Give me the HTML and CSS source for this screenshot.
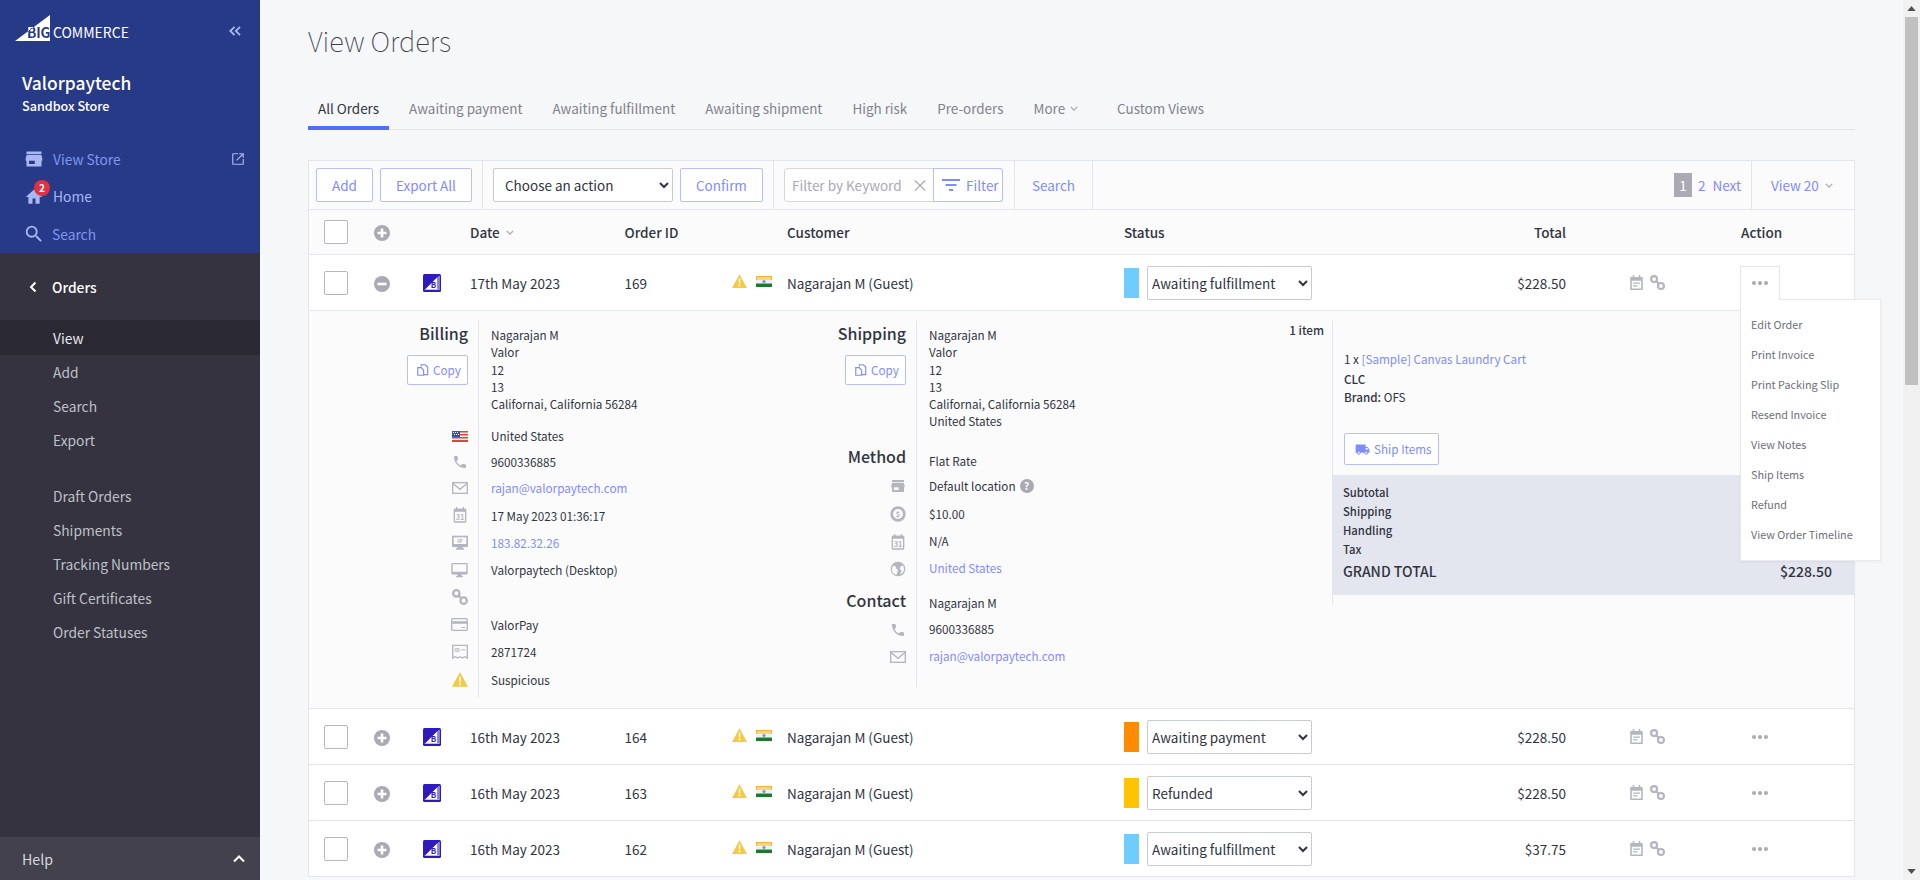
FILE: index.html
```html
<!DOCTYPE html>
<html lang="en">
<head>
<meta charset="utf-8">
<title>View Orders</title>
<link rel="stylesheet" href="styles.css">
</head>
<body>
<svg class="sprite" aria-hidden="true">
  <symbol id="i-store" viewBox="0 0 24 24"><path d="M21 3H3v3h18V3zm1 11v-2.500L20.800 7H3.200L2 11.500V14h1v7h18v-7h1zm-9 4H6v-4h7v4z"/></symbol>
  <symbol id="i-home" viewBox="0 0 24 24"><path d="M10 21v-7h4v7h5.500v-9H23L12 2 1 12h3.500v9z"/></symbol>
  <symbol id="i-search" viewBox="0 0 24 24"><path d="M15.500 14h-.79l-.28-.27A6.470 6.470 0 0 0 16 9.500 6.500 6.500 0 1 0 9.500 16c1.610 0 3.090-.59 4.230-1.570l.27.28v.79l5 4.990L20.490 19l-4.990-5zm-6 0C7.010 14 5 11.990 5 9.500S7.010 5 9.500 5 14 7.010 14 9.500 11.990 14 9.500 14z"/></symbol>
  <symbol id="i-external" viewBox="0 0 24 24"><path d="M20 20H4V4h8V2H4a2 2 0 0 0-2 2v16a2 2 0 0 0 2 2h16a2 2 0 0 0 2-2v-8h-2v8zM14 2v2h4.600L8.800 13.800l1.400 1.400L20 5.400V10h2V2h-8z"/></symbol>
  <symbol id="i-phone" viewBox="0 0 24 24"><path d="M6.620 10.790c1.440 2.830 3.760 5.140 6.590 6.590l2.200-2.200c.27-.27.67-.36 1.020-.24 1.120.37 2.330.57 3.570.57.550 0 1 .45 1 1V20c0 .55-.45 1-1 1C10.610 21 3 13.390 3 4c0-.55.45-1 1-1h3.500c.55 0 1 .45 1 1 0 1.250.2 2.450.57 3.570.11.35.03.74-.25 1.020l-2.200 2.200z"/></symbol>
  <symbol id="i-mail" viewBox="0 0 24 18"><rect x="1" y="1" width="22" height="16" class="ln"/><path d="M1 2l11 9 11-9" class="ln"/></symbol>
  <symbol id="i-cal" viewBox="0 0 20 24"><rect x="1.500" y="3.500" width="17" height="19" rx="1" class="ln"/><path d="M1 2.500h18V7H1zM4 0h2v3H4zM14 0h2v3h-2z"/><text x="10" y="19" class="svg-num">31</text></symbol>
  <symbol id="i-note" viewBox="0 0 20 24"><path d="M1 3h3V0h2.500v3h7V0H16v3h3a1 1 0 0 1 1 1v19a1 1 0 0 1-1 1H1a1 1 0 0 1-1-1V4a1 1 0 0 1 1-1zm1.500 6v12.500h15V9z"/><path d="M4.500 12h11v2h-11zM4.500 16.500h7v2h-7z"/></symbol>
  <symbol id="i-ip" viewBox="0 0 24 22"><path d="M1 0h22a1 1 0 0 1 1 1v15a1 1 0 0 1-1 1h-7v2h2v2H6v-2h2v-2H1a1 1 0 0 1-1-1V1a1 1 0 0 1 1-1z"/><path d="M2.500 2.500h19v10h-19z" fill="#fbfbfb"/><text x="12" y="10.800" class="svg-ip svg-mid">IP</text></symbol>
  <symbol id="i-monitor" viewBox="0 0 24 22"><path d="M2 0h20a2 2 0 0 1 2 2v13a2 2 0 0 1-2 2h-7v2h2v2H7v-2h2v-2H2a2 2 0 0 1-2-2V2a2 2 0 0 1 2-2zm0 2v11h20V2z"/></symbol>
  <symbol id="i-link" viewBox="0 0 24 24"><g class="ln ln-thick"><circle cx="6.500" cy="6.500" r="4.800"/><circle cx="17.500" cy="17.500" r="4.800"/><path d="M9.500 9.500l5 5"/></g></symbol>
  <symbol id="i-card" viewBox="0 0 26 20"><rect x="1" y="1" width="24" height="18" rx="1.500" class="ln"/><path d="M1 5h24v4H1zM16 14h6v1.500h-6z"/></symbol>
  <symbol id="i-id" viewBox="0 0 24 22"><path d="M1 1h22v19l-4-2-3.500 2-3.500-2-3.500 2L5 18l-4 2z" class="ln"/><text x="3.500" y="10.500" class="svg-ip">ID</text><path d="M14 7h6v1.500h-6z"/></symbol>
  <symbol id="i-warn" viewBox="0 0 24 22"><path d="M12 0l12 22H0z" fill="#f5c944"/><path d="M10.600 7h2.800l-.4 8h-2zM10.600 16.500h2.800v3h-2.800z" fill="#fff"/></symbol>
  <symbol id="i-dollar" viewBox="0 0 24 24"><circle cx="12" cy="12" r="9.500" class="ln ln-heavy"/><text x="12" y="16" class="svg-dollar">$</text></symbol>
  <symbol id="i-globe" viewBox="0 0 24 24"><path d="M12 1a11 11 0 1 0 0 22 11 11 0 0 0 0-22zM3 13c0-2.500.7-4.800 2.300-6.200l3.700 2 .5 3 2.500 1.500-.5 3-2 4.500A8.500 8.500 0 0 1 3 13zm12 7l1.500-3.500 1-1.500-2-2.500-1-1.500 2-3 3-1.500C20 8 21 10 21 12.500A8.500 8.500 0 0 1 15 20z" fill-rule="evenodd"/></symbol>
  <symbol id="i-truck" viewBox="0 0 24 24"><path d="M20 8h-3V4H3c-1.100 0-2 .9-2 2v11h2c0 1.660 1.340 3 3 3s3-1.340 3-3h6c0 1.660 1.340 3 3 3s3-1.340 3-3h2v-5l-3-4zM6 18.500c-.83 0-1.500-.67-1.500-1.500s.67-1.500 1.500-1.500 1.500.67 1.500 1.500-.67 1.500-1.500 1.500zm13.500-9l1.960 2.500H17V9.500h2.500zm-1.500 9c-.83 0-1.500-.67-1.500-1.500s.67-1.500 1.500-1.500 1.500.67 1.500 1.500-.67 1.500-1.500 1.500z"/></symbol>
  <symbol id="i-copy" viewBox="0 0 24 24"><path d="M9 6V3h7l4 4v13h-7" class="ln"/><path d="M3 8h6l4 4v9H3z" class="ln"/></symbol>
  <symbol id="i-plus" viewBox="0 0 16 16"><circle cx="8" cy="8" r="8"/><path d="M6.700 3.500h2.600v3.200h3.200v2.600H9.300v3.200H6.700V9.300H3.500V6.700h3.200z" fill="#fff"/></symbol>
  <symbol id="i-minus" viewBox="0 0 16 16"><circle cx="8" cy="8" r="8"/><path d="M3.500 6.700h9v2.600h-9z" fill="#fff"/></symbol>
  <symbol id="i-chip" viewBox="0 0 18 18"><rect width="18" height="18" rx="1.500" fill="#2f1bbd"/><path d="M2 15.500L14.500 3v12.500z" fill="#fff"/><path d="M15.500 2h1v14h-15v-.5h14z" fill="#fff" opacity=".85"/><text x="10.500" y="14.200" class="svg-b">B</text></symbol>
  <symbol id="i-in" viewBox="0 0 16 11"><path d="M0 0h16v4H0z" fill="#f6b13d"/><path d="M1 1h14v3H1z" fill="#fbd77d"/><path d="M0 4h16v3.500H0z" fill="#eef0f2"/><path d="M0 7.500h16V11H0z" fill="#1b7a2e"/><circle cx="8" cy="5.600" r="1.500" fill="#7f8fb8"/></symbol>
  <symbol id="i-us" viewBox="0 0 16 11"><path d="M0 0h16v11H0z" fill="#f3f3f3"/><path d="M0 0h16v1.500H0zM0 3h16v1.500H0zM0 6h16v1.500H0zM0 9h16v2H0z" fill="#d9463c"/><path d="M0 0h8v6H0z" fill="#3b4fb8"/><path d="M1 1h1v1H1zM3 1h1v1H3zM5 1h1v1H5zM2 3h1v1H2zM4 3h1v1H4zM6 3h1v1H6z" fill="#fff"/></symbol>
  <symbol id="i-dots" viewBox="0 0 16 4"><circle cx="2" cy="2" r="2"/><circle cx="8" cy="2" r="2"/><circle cx="14" cy="2" r="2"/></symbol>
</svg>

<div class="app">
  <aside class="sidebar">
    <div class="side-blue">
      <div class="brand">
        <div class="logo">
          <svg class="logo-mark" viewBox="0 0 35 26"><path d="M0 26L35 0v26z" fill="#fff"/></svg>
          <span class="logo-big">BIG</span><span class="logo-commerce">COMMERCE</span>
        </div>
        <svg class="collapse" viewBox="0 0 12 10"><path d="M5.500 .8L1.300 5l4.200 4.200M11 .8L6.800 5 11 9.200"/></svg>
      </div>
      <div class="store-name">Valorpaytech</div>
      <div class="store-sub">Sandbox Store</div>
      <nav class="blue-nav">
        <a class="blue-item"><svg class="blue-ico ico-store"><use href="#i-store"/></svg><span>View Store</span><svg class="ext-ico"><use href="#i-external"/></svg></a>
        <a class="blue-item blue-home"><svg class="blue-ico ico-home"><use href="#i-home"/></svg><span>Home</span><b class="badge">2</b></a>
        <a class="blue-item"><svg class="blue-ico ico-search"><use href="#i-search"/></svg><span>Search</span></a>
      </nav>
    </div>
    <div class="side-dark">
      <div class="orders-head"><svg class="back-ico" viewBox="0 0 8 12"><path d="M6.500 1.500L2 6l4.500 4.500"/></svg>Orders</div>
      <a class="dark-item is-active">View</a>
      <a class="dark-item">Add</a>
      <a class="dark-item">Search</a>
      <a class="dark-item">Export</a>
      <a class="dark-item dark-gap">Draft Orders</a>
      <a class="dark-item">Shipments</a>
      <a class="dark-item">Tracking Numbers</a>
      <a class="dark-item">Gift Certificates</a>
      <a class="dark-item">Order Statuses</a>
    </div>
    <div class="help"><span>Help</span><svg class="help-ico" viewBox="0 0 12 8"><path d="M1 6.500l5-5 5 5"/></svg></div>
  </aside>

  <main class="main">
    <h1 class="title">View Orders</h1>
    <div class="tabs">
      <a class="tab is-active">All Orders</a>
      <a class="tab">Awaiting payment</a>
      <a class="tab">Awaiting fulfillment</a>
      <a class="tab">Awaiting shipment</a>
      <a class="tab">High risk</a>
      <a class="tab">Pre-orders</a>
      <a class="tab tab-more">More<svg class="chev" viewBox="0 0 10 6"><path d="M1 1l4 4 4-4"/></svg></a>
      <a class="tab">Custom Views</a>
    </div>

    <section class="table">
      <div class="toolbar">
        <div class="tgroup tg-add"><button class="btn">Add</button><button class="btn">Export All</button></div>
        <div class="tgroup tg-action">
          <select class="sel sel-action"><option>Choose an action</option></select>
          <button class="btn">Confirm</button>
        </div>
        <div class="tgroup tg-filter">
          <div class="filter">
            <span class="filter-text">Filter by Keyword</span>
            <span class="filter-x">×</span>
            <span class="filter-btn"><svg class="filter-ico" viewBox="0 0 18 12"><path d="M0 1h18M3.500 6h11M7 11h4"/></svg>Filter</span>
          </div>
        </div>
        <div class="tgroup tg-search"><a class="link">Search</a></div>
        <div class="pager">
          <span class="page-cur">1</span><a class="link page-link">2</a><a class="link page-next">Next</a>
        </div>
        <div class="tgroup tg-view"><a class="link">View 20</a><svg class="chev" viewBox="0 0 10 6"><path d="M1 1l4 4 4-4"/></svg></div>
      </div>

      <div class="row head">
        <span class="box"></span>
        <svg class="exp"><use href="#i-plus"/></svg>
        <span></span>
        <span class="date-h">Date<svg class="chev" viewBox="0 0 10 6"><path d="M1 1l4 4 4-4"/></svg></span>
        <span>Order ID</span>
        <span></span>
        <span>Customer</span>
        <span>Status</span>
        <span class="ta-r">Total</span>
        <span></span>
        <span>Action</span>
      </div>

      <div class="row">
        <span class="box"></span>
        <svg class="exp"><use href="#i-minus"/></svg>
        <svg class="chip"><use href="#i-chip"/></svg>
        <span>17th May 2023</span>
        <span>169</span>
        <span class="marks"><svg class="warn"><use href="#i-warn"/></svg><svg class="flag"><use href="#i-in"/></svg></span>
        <span>Nagarajan M (Guest)</span>
        <span class="status"><i class="swatch s-blue"></i><select class="sel"><option>Awaiting fulfillment</option></select></span>
        <span class="ta-r">$228.50</span>
        <span class="acts"><svg class="act-cal"><use href="#i-note"/></svg><svg class="act-link"><use href="#i-link"/></svg></span>
        <span class="action-cell">
          <span class="dots-btn is-open"><svg class="dots"><use href="#i-dots"/></svg></span>
          <ul class="menu">
            <li>Edit Order</li>
            <li>Print Invoice</li>
            <li>Print Packing Slip</li>
            <li>Resend Invoice</li>
            <li>View Notes</li>
            <li>Ship Items</li>
            <li>Refund</li>
            <li>View Order Timeline</li>
          </ul>
        </span>
      </div>

      <div class="detail">
        <div class="dcol dcol-billing">
          <div class="labels">
            <h3 class="dh">Billing</h3>
            <button class="btn btn-copy"><svg class="copy-ico"><use href="#i-copy"/></svg>Copy</button>
            <div class="l-gap-a"></div>
            <div class="dr dr-25"><svg class="flag"><use href="#i-us"/></svg></div>
            <div class="dr dr-26"><svg class="di"><use href="#i-phone"/></svg></div>
            <div class="dr"><svg class="di di-mail"><use href="#i-mail"/></svg></div>
            <div class="dr"><svg class="di"><use href="#i-cal"/></svg></div>
            <div class="dr"><svg class="di"><use href="#i-ip"/></svg></div>
            <div class="dr"><svg class="di di-wide"><use href="#i-monitor"/></svg></div>
            <div class="dr"><svg class="di di-sm"><use href="#i-link"/></svg></div>
            <div class="dr"><svg class="di di-card"><use href="#i-card"/></svg></div>
            <div class="dr"><svg class="di"><use href="#i-id"/></svg></div>
            <div class="dr"><svg class="di di-warn"><use href="#i-warn"/></svg></div>
          </div>
          <div class="vals vals-billing">
            <div class="addr">Nagarajan M<br>Valor<br>12<br>13<br>Californai, California 56284</div>
            <div class="v-gap-a"></div>
            <div class="dr dr-25">United States</div>
            <div class="dr dr-26">9600336885</div>
            <div class="dr"><a class="link">rajan@valorpaytech.com</a></div>
            <div class="dr">17 May 2023 01:36:17</div>
            <div class="dr"><a class="link">183.82.32.26</a></div>
            <div class="dr">Valorpaytech (Desktop)</div>
            <div class="dr"></div>
            <div class="dr">ValorPay</div>
            <div class="dr">2871724</div>
            <div class="dr">Suspicious</div>
          </div>
        </div>

        <div class="dcol dcol-shipping">
          <div class="labels">
            <h3 class="dh">Shipping</h3>
            <button class="btn btn-copy"><svg class="copy-ico"><use href="#i-copy"/></svg>Copy</button>
            <h3 class="dh dh-method">Method</h3>
            <div class="dr dr-first"><svg class="di"><use href="#i-store"/></svg></div>
            <div class="dr dr-push"><svg class="di"><use href="#i-dollar"/></svg></div>
            <div class="dr"><svg class="di"><use href="#i-cal"/></svg></div>
            <div class="dr"><svg class="di"><use href="#i-globe"/></svg></div>
            <h3 class="dh dh-contact">Contact</h3>
            <div class="dr dr-first"><svg class="di"><use href="#i-phone"/></svg></div>
            <div class="dr"><svg class="di di-mail"><use href="#i-mail"/></svg></div>
          </div>
          <div class="vals vals-shipping">
            <div class="addr">Nagarajan M<br>Valor<br>12<br>13<br>Californai, California 56284<br>United States</div>
            <div class="dr dr-25 dr-flat">Flat Rate</div>
            <div class="dr dr-26 dr-tuck">Default location<i class="qm">?</i></div>
            <div class="dr dr-push">$10.00</div>
            <div class="dr">N/A</div>
            <div class="dr"><a class="link">United States</a></div>
            <div class="dr dr-contact">Nagarajan M</div>
            <div class="dr dr-25">9600336885</div>
            <div class="dr"><a class="link">rajan@valorpaytech.com</a></div>
          </div>
        </div>

        <div class="dcol-count">1 item</div>

        <div class="dcol-items">
          <div class="items-top">
            <div class="item-name">1 x <a class="link">[Sample] Canvas Laundry Cart</a></div>
            <div class="item-sku">CLC</div>
            <div class="item-brand"><b class="sb">Brand:</b> OFS</div>
            <button class="btn btn-ship"><svg class="truck-ico"><use href="#i-truck"/></svg>Ship Items</button>
          </div>
          <div class="totals">
            <div class="tot">Subtotal</div>
            <div class="tot">Shipping</div>
            <div class="tot">Handling</div>
            <div class="tot">Tax</div>
            <div class="tot-grand"><span>GRAND TOTAL</span><span class="grand-val">$228.50</span></div>
          </div>
        </div>
      </div>

      <div class="row">
        <span class="box"></span>
        <svg class="exp"><use href="#i-plus"/></svg>
        <svg class="chip"><use href="#i-chip"/></svg>
        <span>16th May 2023</span>
        <span>164</span>
        <span class="marks"><svg class="warn"><use href="#i-warn"/></svg><svg class="flag"><use href="#i-in"/></svg></span>
        <span>Nagarajan M (Guest)</span>
        <span class="status"><i class="swatch s-orange"></i><select class="sel"><option>Awaiting payment</option></select></span>
        <span class="ta-r">$228.50</span>
        <span class="acts"><svg class="act-cal"><use href="#i-note"/></svg><svg class="act-link"><use href="#i-link"/></svg></span>
        <span class="action-cell"><span class="dots-btn"><svg class="dots"><use href="#i-dots"/></svg></span></span>
      </div>
      <div class="row">
        <span class="box"></span>
        <svg class="exp"><use href="#i-plus"/></svg>
        <svg class="chip"><use href="#i-chip"/></svg>
        <span>16th May 2023</span>
        <span>163</span>
        <span class="marks"><svg class="warn"><use href="#i-warn"/></svg><svg class="flag"><use href="#i-in"/></svg></span>
        <span>Nagarajan M (Guest)</span>
        <span class="status"><i class="swatch s-yellow"></i><select class="sel"><option>Refunded</option></select></span>
        <span class="ta-r">$228.50</span>
        <span class="acts"><svg class="act-cal"><use href="#i-note"/></svg><svg class="act-link"><use href="#i-link"/></svg></span>
        <span class="action-cell"><span class="dots-btn"><svg class="dots"><use href="#i-dots"/></svg></span></span>
      </div>
      <div class="row">
        <span class="box"></span>
        <svg class="exp"><use href="#i-plus"/></svg>
        <svg class="chip"><use href="#i-chip"/></svg>
        <span>16th May 2023</span>
        <span>162</span>
        <span class="marks"><svg class="warn"><use href="#i-warn"/></svg><svg class="flag"><use href="#i-in"/></svg></span>
        <span>Nagarajan M (Guest)</span>
        <span class="status"><i class="swatch s-blue"></i><select class="sel"><option>Awaiting fulfillment</option></select></span>
        <span class="ta-r">$37.75</span>
        <span class="acts"><svg class="act-cal"><use href="#i-note"/></svg><svg class="act-link"><use href="#i-link"/></svg></span>
        <span class="action-cell"><span class="dots-btn"><svg class="dots"><use href="#i-dots"/></svg></span></span>
      </div>
    </section>
  </main>

  <div class="scrollbar">
    <svg class="sb-arrow" viewBox="0 0 10 6"><path d="M5 0l5 6H0z"/></svg>
    <div class="sb-thumb"></div>
    <svg class="sb-arrow sb-down" viewBox="0 0 10 6"><path d="M0 0h10L5 6z"/></svg>
  </div>
</div>
</body>
</html>
```
FILE: styles.css
```css
* { box-sizing: border-box; }
html, body { margin: 0; height: 100%; overflow: hidden; }
body {
  font-family: "Noto Sans CJK SC", "Noto Sans", sans-serif;
  font-size: 13.500px;
  line-height: 20px;
  color: #313440;
  background: #f6f7f9;
}
.sprite { display: none; }
svg { display: block; fill: currentColor; flex: none; }
h1, h3, ul { margin: 0; padding: 0; font-weight: normal; list-style: none; }
a { color: inherit; text-decoration: none; }
.ln { fill: none; stroke: currentColor; stroke-width: 2; }
.ln-thick { stroke-width: 3.400; }
.ln-heavy { stroke-width: 4; }
.svg-num { font-size: 11px; font-weight: 700; text-anchor: middle; }
.svg-ip { font-size: 8px; font-weight: 700; text-anchor: start; }
.svg-mid { text-anchor: middle; }
.svg-dollar { font-size: 11px; font-weight: 700; text-anchor: middle; }
.svg-b { font-size: 8px; font-weight: 700; text-anchor: middle; fill: #2f1bbd; }

.app { display: flex; height: 880px; overflow: hidden; }

/* sidebar */
.sidebar { width: 260px; flex: none; display: flex; flex-direction: column; background: #35333f; }
.side-blue { height: 253px; background: #273a87; padding: 15px 0 0; color: #fff; }
.brand { display: flex; justify-content: space-between; padding: 0 19px 0 15px; height: 26px; }
.logo { position: relative; width: 116px; height: 26px; }
.logo-mark { width: 35px; height: 26px; }
.logo-big, .logo-commerce { position: absolute; top: 9px; font-size: 14px; line-height: 16px; font-weight: 400; }
.logo-big {
  left: 12px;
  font-weight: 700;
  letter-spacing: -.3px;
  background: linear-gradient(143deg, #fff 23%, #273a87 23%);
  -webkit-background-clip: text;
  background-clip: text;
  color: transparent;
}
.logo-commerce { left: 38px; color: #fff; }
.collapse { width: 12px; height: 10px; margin-top: 11px; fill: none; stroke: #a9b8f5; stroke-width: 1.800; }
.store-name { margin: 31px 0 0 22px; font-size: 17.400px; line-height: 22px; font-weight: 500; }
.store-sub { margin: 3px 0 0 22px; font-size: 12.600px; line-height: 18px; font-weight: 500; }
.blue-nav { margin-top: 25px; }
.blue-item { position: relative; display: flex; align-items: center; height: 37.500px; padding-left: 24px; color: #7f98ee; font-size: 13.800px; }
.blue-ico { color: #a9b8f5; }
.ico-store { width: 20px; height: 20px; margin-right: 9px; }
.ico-home { width: 18px; height: 18px; margin: 2px 10px 0 1px; }
.ico-search { width: 22px; height: 22px; margin: 0 7px 0 -1px; }
.blue-home { color: #a9b8f5; }
.ext-ico { position: absolute; left: 231px; width: 14px; height: 14px; color: #a9b8f5; }
.badge { position: absolute; left: 34px; top: 2px; width: 16px; height: 16px; border-radius: 50%; background: #e0323f; color: #fff; font-size: 10px; line-height: 16px; text-align: center; font-weight: 700; }

.side-dark { flex: 1; }
.orders-head { display: flex; align-items: center; height: 67px; padding-left: 29px; color: #fff; font-size: 13.800px; font-weight: 500; }
.back-ico { width: 8px; height: 12px; margin-right: 15px; fill: none; stroke: #fff; stroke-width: 2; }
.dark-item { display: flex; align-items: center; height: 34px; padding-left: 53px; color: #bfc0c9; font-size: 13.800px; }
.dark-item.is-active { height: 35px; background: #2a2933; color: #e8e8ee; }
.dark-gap { margin-top: 22px; }
.help { height: 43px; display: flex; justify-content: space-between; align-items: center; padding: 0 15px 0 22px; background: #43414e; color: #d7d7de; font-size: 14.200px; }
.help-ico { width: 12px; height: 8px; fill: none; stroke: #fff; stroke-width: 2; }

/* main */
.main { flex: 1; min-width: 0; padding: 20px 48px 0; overflow: hidden; }
.title { font-size: 27.400px; line-height: 40px; font-weight: 100; color: #3c3e4c; }
.tabs { display: flex; height: 40px; margin-top: 30px; border-bottom: 1px solid #e3e5ea; }
.tab { position: relative; height: 40px; padding: 0 10px; margin-right: 10px; font-size: 13.450px; line-height: 37px; color: #81828d; }
.tab.is-active { color: #313440; border-bottom: 4px solid #4f6dff; }
.tab-more { display: flex; align-items: center; height: 37px; margin-right: 19px; }
.chev { width: 8px; height: 5px; margin-left: 5px; fill: none; stroke: #a5a7b2; stroke-width: 1.500; }

/* table */
.table { margin-top: 30px; border: 1px solid #e3e6ef; border-bottom: 0; background: #fff; }
.toolbar { display: flex; height: 49px; background: #fbfbfc; border-bottom: 1px solid #e3e6ef; }
.tgroup { display: flex; align-items: center; border-right: 1px solid #e3e6ef; }
.tg-add { width: 174px; padding-left: 7px; gap: 7px; }
.tg-action { width: 291px; padding-left: 10px; gap: 7px; }
.tg-filter { width: 241px; padding-left: 10px; }
.tg-search { width: 78px; justify-content: center; }
.btn { height: 34px; padding: 0 15px; border: 1px solid #b6c0ff; border-radius: 2px; background: #fff; color: #7f8cff; font: inherit; line-height: 20px; display: inline-flex; align-items: center; white-space: nowrap; }
.link { color: #7f8cff; }
.sel { width: 165px; height: 34px; padding: 0; border: 1px solid #c9cbd2; border-radius: 2px; background: #fff; color: #313440; font: inherit; }
.sel-action { width: 180px; padding-left: 7px; }
.filter { display: flex; align-items: center; width: 219px; height: 34px; border: 1px solid #d5d7dd; border-radius: 3px; background: #fff; }
.filter-text { padding-left: 7px; color: #a8a9b3; width: 122px; white-space: nowrap; }
.filter-x { width: 26px; text-align: center; color: #a8a9b3; font-size: 17px; }
.filter-btn { display: flex; align-items: center; height: 34px; flex: 1; margin: 0 -1px 0 0; padding-left: 8px; border: 1px solid #b6c0ff; border-radius: 0 3px 3px 0; color: #7f8cff; white-space: nowrap; }
.filter-ico { width: 18px; height: 12px; margin-right: 6px; fill: none; stroke: #7f8cff; stroke-width: 2; }
.pager { margin-left: auto; display: flex; align-items: center; padding-right: 10px; }
.page-cur { width: 18px; height: 24px; background: #a9aab3; color: #fff; text-align: center; line-height: 24px; }
.page-link { margin-left: 6px; }
.page-next { margin-left: 7px; }
.tg-view { width: 103px; border-right: 0; border-left: 1px solid #e3e6ef; padding-left: 19px; }
.tg-view .chev { margin-left: 6px; }

.row { display: grid; grid-template-columns: 50px 49px 47px 154.500px 107.500px 55px 337px 276px 166px 175px 113px; align-items: center; height: 56px; padding-left: 15px; border-bottom: 1px solid #e3e6ef; background: #fff; white-space: nowrap; }
.head { height: 45px; background: #fbfbfc; font-weight: 500; color: #313440; }
.box { display: block; width: 24px; height: 24px; border: 1px solid #b4b6c0; border-radius: 2px; background: #fff; }
.exp { width: 16px; height: 16px; margin-top: 2px; color: #a9aab3; }
.chip { width: 18px; height: 18px; }
.date-h { display: flex; align-items: center; }
.date-h .chev { margin-left: 6px; }
.marks { display: flex; align-items: center; gap: 9px; margin-top: -2px; }
.warn { width: 15px; height: 14px; margin-top: -2px; }
.flag { width: 16px; height: 11px; }
.status { display: flex; align-items: center; gap: 8px; }
.swatch { display: block; width: 15px; height: 30px; }
.s-blue { background: #70ccff; }
.s-orange { background: #ff8c00; }
.s-yellow { background: #ffc400; }
.ta-r { text-align: right; }
.acts { display: flex; align-items: center; gap: 7px; padding-left: 64px; color: #b3b5bf; }
.act-cal { width: 13px; height: 15px; }
.act-link { width: 15px; height: 15px; margin-top: -1px; }
.action-cell { position: relative; display: block; height: 34px; }
.dots-btn { display: flex; align-items: center; justify-content: center; width: 40px; height: 34px; margin-left: -1px; color: #a9aab3; }
.dots-btn.is-open { position: relative; z-index: 3; background: #fff; border: 1px solid #e3e6ef; border-bottom: 0; }
.dots { width: 16px; height: 4px; }
.menu { position: absolute; z-index: 2; left: -1px; top: 33px; width: 141px; height: 262px; padding-top: 9px; background: #fff; border: 1px solid #e8eaf0; box-shadow: 0 1px 3px rgba(49, 52, 64, .06); }
.menu li { height: 30px; padding-left: 10px; font-size: 10.800px; line-height: 30px; color: #6e6f7a; }

/* expanded detail */
.detail { display: flex; height: 398px; padding-top: 10px; background: #fbfbfb; border-bottom: 1px solid #e3e6ef; font-size: 11.700px; line-height: 17.250px; color: #313440; }
.dcol { display: flex; align-items: flex-start; }
.labels { display: flex; flex-direction: column; align-items: flex-end; padding-right: 10px; border-right: 1px solid #e3e6ef; color: #b3b5bf; }
.dcol-billing .labels { width: 170px; height: 377px; }
.dcol-billing .vals { width: 281px; }
.dcol-shipping .labels { width: 157px; height: 366px; }
.dcol-shipping .vals { width: 323px; }
.vals { padding: 5px 0 0 12px; }
.dh { height: 24px; font-size: 16px; line-height: 24px; font-weight: 500; color: #313440; }
.btn-copy { height: 30px; margin-top: 10px; padding: 0 8px; font-size: 11.700px; width: 61px; }
.copy-ico { width: 14px; height: 14px; margin-right: 3px; }
.l-gap-a { height: 38.500px; flex: none; }
.v-gap-a { height: 11px; }
.dr { display: flex; align-items: center; height: 27.330px; }
.dr-25 { height: 25px; }
.dr-26 { height: 26px; }
.di { width: 16px; height: 16px; }
.di-mail { height: 12px; }
.di-wide { width: 17px; height: 15px; }
.di-card { width: 17px; height: 13px; }
.di-warn { height: 15px; }
.dh-method { margin-top: 59px; }
.dh-contact { margin-top: 5px; }
.dr-first { margin-top: 4.500px; }
.dr-flat { margin-top: 19px; }
.dr-tuck { margin-top: -1px; }
.dr-push { margin-top: 1px; }
.dr-contact { margin-top: 8px; height: 27px; }
.qm { display: block; width: 14px; height: 14px; margin-left: 4px; border-radius: 50%; background: #a9aab3; color: #fff; text-align: center; font-style: normal; font-weight: 700; font-size: 10px; line-height: 14px; }
.dcol-count { width: 93px; padding-right: 9px; text-align: right; font-weight: 500; }
.dcol-items { flex: 1; display: flex; flex-direction: column; height: 284px; border-left: 1px solid #e3e6ef; margin-left: -1px; }
.items-top { height: 154px; padding: 28px 0 0 11px; }
.item-name { height: 20px; line-height: 20px; }
.item-sku { height: 19px; line-height: 20px; font-weight: 500; }
.item-brand { height: 18px; line-height: 18px; }
.sb { font-weight: 500; }
.btn-ship { height: 32px; margin-top: 27px; padding: 0 10px; font-size: 11.700px; width: 95px; }
.truck-ico { width: 15px; height: 15px; margin-right: 4px; }
.totals { height: 120px; margin-left: -1px; padding: 8px 22px 0 11px; background: #e3e6ee; font-weight: 500; font-size: 11.300px; }
.tot { height: 19px; line-height: 19px; }
.tot-grand { display: flex; justify-content: space-between; height: 24px; line-height: 24px; font-size: 14px; }

/* scrollbar */
.scrollbar { position: relative; width: 17px; flex: none; background: #f1f1f1; padding: 17px 2px 0; }
.sb-thumb { height: 368px; background: #c1c1c1; }
.sb-arrow { position: absolute; top: 6px; left: 4px; width: 9px; height: 5px; fill: #505050; }
.sb-down { top: auto; bottom: 6px; }
```
